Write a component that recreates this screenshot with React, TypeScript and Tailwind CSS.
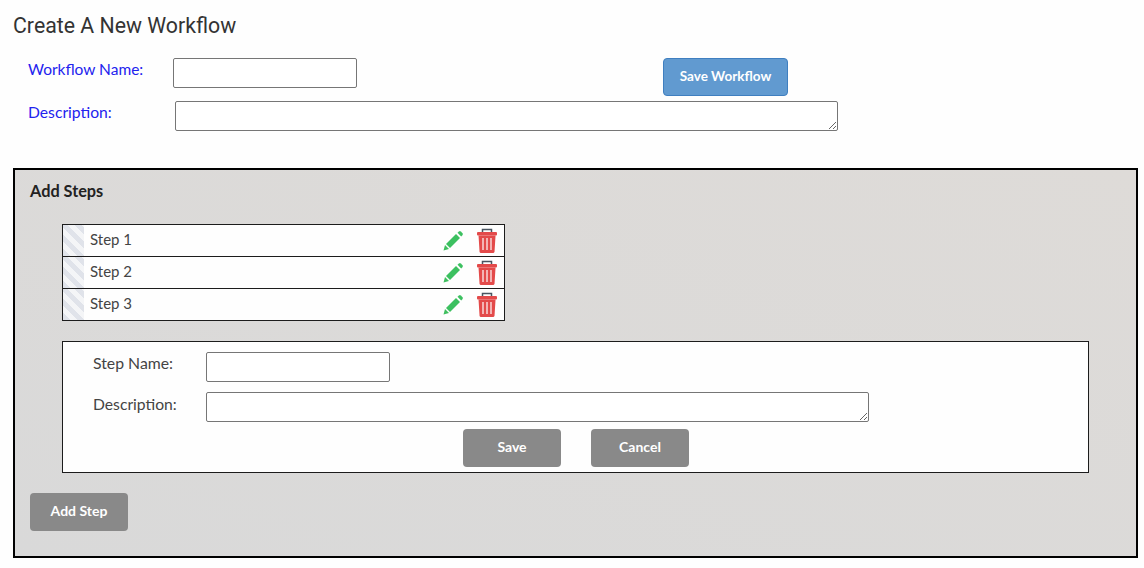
const labelFont = "font-['Lato','Liberation_Sans',sans-serif]";

function Pencil() {
  return (
    <svg width="22" height="22" viewBox="0 0 22 22" className="block">
      <path d="M1.5 20.5 L3 15 L7 19 Z" fill="#3fbf5f" />
      <path d="M4 14 L14 4 L18 8 L8 18 Z" fill="#3cc060" />
      <path d="M15.5 2.8 L17 1.4 Q18 0.8 18.8 1.4 L20.6 3.2 Q21.2 4 20.6 5 L19.2 6.5 Z" fill="#3cc060" />
    </svg>
  );
}

function Trash() {
  return (
    <svg width="22" height="26" viewBox="0 0 22 26" className="block">
      <path d="M6.5 5 V1.5 H15.5 V5" fill="none" stroke="#4a5560" strokeWidth="1.5" />
      <rect x="1" y="4" width="20" height="3.5" rx="1" fill="#e34a4a" />
      <path d="M2.5 7.5 H19.5 L18.5 23.5 Q18.4 25 17 25 H5 Q3.6 25 3.5 23.5 Z" fill="#e34a4a" />
      <path d="M7 10 V22 M11 10 V22 M15 10 V22" stroke="#f7cfcf" strokeWidth="1.6" />
    </svg>
  );
}

function GrayButton({ label, className }: { label: string; className?: string }) {
  return (
    <button
      className={`h-[38px] w-[98px] rounded-[4px] bg-[#898989] pb-[3px] text-[14px] font-bold text-white ${labelFont} ${className ?? ''}`}
    >
      {label}
    </button>
  );
}

function StepRow({ name, last }: { name: string; last?: boolean }) {
  return (
    <div className={`flex items-center bg-[#fefefe] ${last ? 'h-[31px]' : 'h-[32px] border-b border-[#1c1c1c]'}`}>
      <div className="h-full w-[21px] bg-[repeating-linear-gradient(45deg,#e0e3ea,#e0e3ea_5px,#f4f5f7_5px,#f4f5f7_10px)]" />
      <span className={`ml-[6px] mb-[2px] flex-1 text-[15px] text-[#444] ${labelFont}`}>{name}</span>
      <Pencil />
      <div className="ml-[12px] mr-[6px]">
        <Trash />
      </div>
    </div>
  );
}

export default function App() {
  const inputCls = 'block h-[30px] w-[184px] rounded-[2px] border border-[#767676] bg-white';
  const areaCls = 'block h-[30px] w-[663px] resize rounded-[2px] border border-[#767676] bg-white';

  return (
    <div className="h-[568px] w-[1144px] overflow-hidden bg-[#fefefe]">
      <h1 className="pl-[13px] pt-[12px] font-['Roboto','Liberation_Sans',sans-serif] text-[21.3px] font-normal leading-[28px] text-[#333]">
        Create A New Workflow
      </h1>

      <div className="mt-[18px] flex items-start pl-[28px]">
        <label className={`mt-[1px] w-[145px] text-[15.5px] leading-[20px] text-[#2222ee] ${labelFont}`}>
          Workflow Name:
        </label>
        <input className={inputCls} />
        <button
          className={`ml-[306px] h-[38px] w-[125px] rounded-[4px] border border-[#3f7fc0] bg-[#619ad0] pb-[1px] text-[13.5px] font-bold text-white ${labelFont}`}
        >
          Save Workflow
        </button>
      </div>

      <div className="mt-[5px] flex items-start pl-[28px]">
        <label className={`mt-[1px] w-[147px] text-[15.7px] leading-[20px] text-[#2222ee] ${labelFont}`}>
          Description:
        </label>
        <textarea className={areaCls} />
      </div>

      <section className="ml-[13px] mt-[37px] h-[390px] w-[1125px] border-2 border-black bg-[linear-gradient(200deg,#dedbd8,#d9d9d9)] pl-[15px] pt-[11px]">
        <h2 className={`text-[16.3px] font-bold leading-[20px] text-[#222] ${labelFont}`}>Add Steps</h2>

        <div className="ml-[32px] mt-[23px] w-[443px] border border-[#1c1c1c]">
          <StepRow name="Step 1" />
          <StepRow name="Step 2" />
          <StepRow name="Step 3" last />
        </div>

        <div className="ml-[32px] mt-[20px] h-[132px] w-[1027px] border border-[#1c1c1c] bg-[#fefefe] pt-[10px]">
          <div className="flex items-start pl-[30px]">
            <label className={`w-[113px] text-[15.8px] leading-[22px] text-[#444] ${labelFont}`}>Step Name:</label>
            <input className={inputCls} />
          </div>
          <div className="mt-[10px] flex items-start pl-[30px]">
            <label className={`mt-[1px] w-[113px] text-[15.7px] leading-[22px] text-[#444] ${labelFont}`}>Description:</label>
            <textarea className={areaCls} />
          </div>
          <div className="ml-[400px] mt-[7px] flex gap-[30px]">
            <GrayButton label="Save" />
            <GrayButton label="Cancel" />
          </div>
        </div>

        <GrayButton label="Add Step" className="mt-[20px] block" />
      </section>
    </div>
  );
}
